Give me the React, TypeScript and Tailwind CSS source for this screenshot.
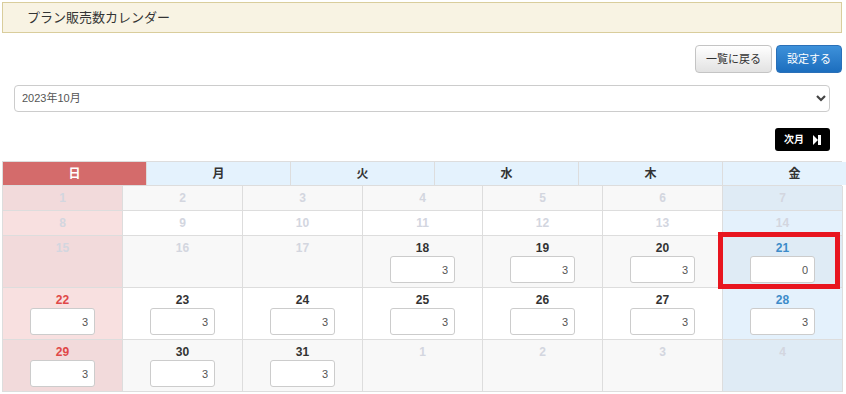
import React from "react";

const font = { fontFamily: '"Liberation Sans", "Noto Sans CJK JP", sans-serif' };

const headers = ["日", "月", "火", "水", "木", "金"];

type Day = { day: number; dim: boolean; value?: string };

const weeks: Day[][] = [
  [1, 2, 3, 4, 5, 6, 7].map((d) => ({ day: d, dim: true })),
  [8, 9, 10, 11, 12, 13, 14].map((d) => ({ day: d, dim: true })),
  [15, 16, 17].map((d) => ({ day: d, dim: true } as Day)).concat(
    [18, 19, 20, 21].map((d) => ({ day: d, dim: false, value: d === 21 ? "0" : "3" }))
  ),
  [22, 23, 24, 25, 26, 27, 28].map((d) => ({ day: d, dim: false, value: "3" })),
  [29, 30, 31].map((d) => ({ day: d, dim: false, value: "3" } as Day)).concat(
    [1, 2, 3, 4].map((d) => ({ day: d, dim: true }))
  ),
];

function cellBg(col: number, row: number) {
  const odd = row % 2 === 0;
  if (col === 0) return odd ? "bg-[#f2dadb]" : "bg-[#f8e0e0]";
  if (col === 6) return odd ? "bg-[#dfebf5]" : "bg-[#e4f1fc]";
  return odd ? "bg-[#f8f8f8]" : "bg-white";
}

function numColor(col: number, dim: boolean) {
  if (dim) return "text-[#d3d6df]";
  if (col === 0) return "text-[#e04848]";
  if (col === 6) return "text-[#3d8bc9]";
  return "text-[#333]";
}

function StepForward() {
  return (
    <svg width="8" height="10" viewBox="0 0 8 10" className="ml-[9px]">
      <path d="M0 0 L5 5 L0 10 Z" fill="white" />
      <rect x="5" y="0" width="3" height="10" fill="white" />
    </svg>
  );
}

export default function App() {
  return (
    <div className="w-[846px] h-[394px] overflow-hidden bg-white text-[#333]" style={font}>
      <div className="w-[840px] ml-[2px] pt-[2px]">
        <div className="h-[31px] bg-[#f8f3e3] border border-[#d9cd9c] flex items-center pl-[24px] text-[13px]">
          プラン販売数カレンダー
        </div>

        <div className="mt-[12px] flex justify-end gap-[4px]">
          <button className="h-[28px] w-[77px] rounded-[4px] border border-[#c4c4c4] bg-linear-to-b from-white to-[#e2e2e2] text-[11px] text-[#333]">
            一覧に戻る
          </button>
          <button className="h-[28px] w-[66px] rounded-[4px] border border-[#2a70b8] bg-linear-to-b from-[#3d91da] to-[#1c6ebe] text-[11px] text-white">
            設定する
          </button>
        </div>

        <div className="mt-[12px] px-[12px]">
          <div className="relative">
            <select
              className="w-full h-[27px] appearance-none rounded-[4px] border border-[#ccc] bg-white pl-[7px] text-[11px] text-[#555]"
              style={font}
              defaultValue="2023-10"
            >
              <option value="2023-10">2023年10月</option>
            </select>
            <svg
              width="10"
              height="7"
              viewBox="0 0 10 7"
              className="absolute right-[4px] top-[10px] pointer-events-none"
            >
              <path d="M1 1 L5 5 L9 1" stroke="#444" strokeWidth="2.2" fill="none" />
            </svg>
          </div>
        </div>

        <div className="mt-[16px] flex justify-end pr-[12px]">
          <div className="h-[23px] w-[55px] rounded-[3px] bg-black flex items-center justify-center text-white text-[10px] font-bold">
            次月
            <StepForward />
          </div>
        </div>

        <div className="mt-[10px]">
          <div className="flex border-t border-b border-l border-[#ddd] h-[25px]">
            {headers.map((h, i) => (
              <div
                key={h}
                className={
                  i === 0
                    ? "w-[144px] shrink-0 border-r border-[#ddd] bg-[#d46b6b] text-white flex items-center justify-center text-[12px] font-bold"
                    : "w-[144px] shrink-0 border-r border-[#ddd] bg-[#e4f2fd] text-[#333] flex items-center justify-center text-[12px] font-bold"
                }
              >
                {h}
              </div>
            ))}
          </div>

          <div className="grid grid-cols-[repeat(7,120px)] border-l border-[#ddd]">
            {weeks.map((week, r) =>
              week.map((d, c) => (
                <div
                  key={`${r}-${c}`}
                  className={`relative border-r border-b border-[#ddd] py-[4px] flex flex-col items-center ${cellBg(c, r)}`}
                >
                  <div className={`leading-[16px] text-[12px] font-bold ${numColor(c, d.dim)}`}>{d.day}</div>
                  {d.value !== undefined && (
                    <input
                      readOnly
                      value={d.value}
                      className="w-[65px] h-[27px] rounded-[3px] border border-[#ccc] bg-white text-right pr-[6px] text-[11px] text-[#555]"
                      style={font}
                    />
                  )}
                  {d.day === 21 && !d.dim && (
                    <div className="absolute -left-[5px] -top-[4px] w-[122px] h-[57px] border-[5px] border-[#e8151f] z-10" />
                  )}
                </div>
              ))
            )}
          </div>
        </div>
      </div>
    </div>
  );
}
